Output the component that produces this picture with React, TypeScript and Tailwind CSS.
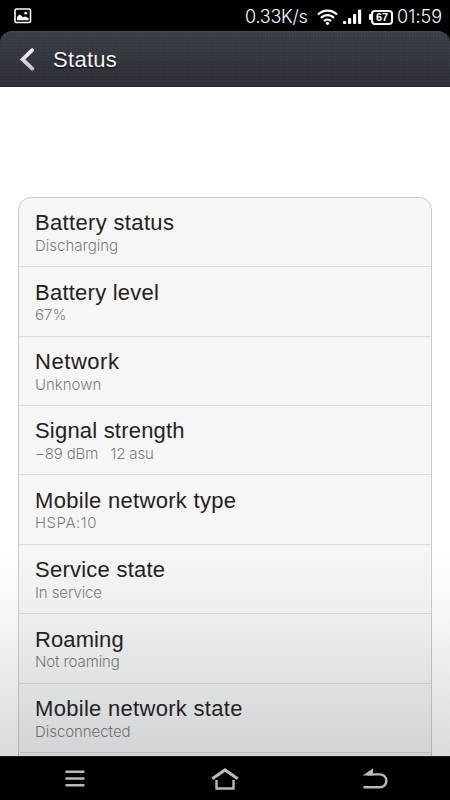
import React from "react";

type Item = { title: string; detail: string; titleTracking: string; detailTracking: string };

const items: Item[] = [
  { title: "Battery status", detail: "Discharging", titleTracking: "tracking-[0.34px]", detailTracking: "tracking-[0px]" },
  { title: "Battery level", detail: "67%", titleTracking: "tracking-[0.24px]", detailTracking: "tracking-[0px]" },
  { title: "Network", detail: "Unknown", titleTracking: "tracking-[0.55px]", detailTracking: "tracking-[0px]" },
  { title: "Signal strength", detail: "−89 dBm   12 asu", titleTracking: "tracking-[0.2px]", detailTracking: "tracking-[-0.13px]" },
  { title: "Mobile network type", detail: "HSPA:10", titleTracking: "tracking-[0.3px]", detailTracking: "tracking-[0.5px]" },
  { title: "Service state", detail: "In service", titleTracking: "tracking-[0.24px]", detailTracking: "tracking-[-0.1px]" },
  { title: "Roaming", detail: "Not roaming", titleTracking: "tracking-[0.1px]", detailTracking: "tracking-[-0.1px]" },
  { title: "Mobile network state", detail: "Disconnected", titleTracking: "tracking-[0.3px]", detailTracking: "tracking-[-0.05px]" },
];

function StatusBar() {
  return (
    <div className="flex h-[31px] shrink-0 items-center pl-[14px] pr-[8px] text-white">
      <svg width="18" height="16" viewBox="0 0 18 16">
        <rect x="1" y="1" width="15.5" height="13.5" rx="1.5" fill="none" stroke="#fff" strokeWidth="1.6" />
        <path d="M3 12.3V9L5.5 6.5l2 1.2L9 9.3l2.2-.9 3.3 1.6v2.3z" fill="#fff" />
        <circle cx="11.7" cy="5.2" r="1.4" fill="#fff" />
      </svg>
      <span className="ml-auto mt-[2px] w-[63px] whitespace-nowrap font-[Inter,sans-serif] text-[18px] font-light leading-none tracking-[-0.25px]">0.33K/s</span>
      <svg className="ml-[9px] mt-[2px]" width="21" height="16" viewBox="0 0 21 16" fill="none" stroke="#fff" strokeWidth="2.2">
        <path d="M1 5.5a13.5 13.5 0 0 1 19 0M4 8.9a9.2 9.2 0 0 1 13 0M7 12.1a5 5 0 0 1 7 0" />
        <circle cx="10.5" cy="14.3" r="1.6" fill="#fff" stroke="none" />
      </svg>
      <svg className="ml-[5px] mt-[2px]" width="19" height="15" viewBox="0 0 19 15" fill="#fff">
        <rect x="0" y="12" width="3.2" height="3" rx="1" />
        <rect x="5" y="9" width="3.2" height="6" rx="1" />
        <rect x="10" y="5" width="3.2" height="10" rx="1" />
        <rect x="15" y="0.5" width="3.2" height="14.5" rx="1" />
      </svg>
      <div className="ml-[7px] mt-[3px] flex items-center">
        <div className="h-[6px] w-[2px] rounded-l-[1px] bg-white" />
        <div className="flex h-[15px] w-[22px] items-center justify-center rounded-[4px] border-2 border-white pt-[1px] text-[11px] font-bold leading-none">67</div>
      </div>
      <span className="ml-[4px] mt-[2px] w-[45px] whitespace-nowrap font-[Inter,sans-serif] text-[18px] font-light leading-none tracking-[0.1px]">01:59</span>
    </div>
  );
}

function Header() {
  return (
    <div className="flex h-[56px] shrink-0 items-center rounded-t-[12px] border-b border-[#25272b] border-t border-t-[#494b51] bg-[repeating-linear-gradient(90deg,rgba(0,0,0,0.06)_0_1px,transparent_1px_3px),repeating-linear-gradient(0deg,rgba(0,0,0,0.06)_0_1px,transparent_1px_3px),linear-gradient(#3d4149,#2e3137)] pl-[19px]">
      <svg width="17" height="24" viewBox="0 0 17 24" fill="none">
        <defs>
          <linearGradient id="chevron" x1="0" y1="0" x2="0" y2="1">
            <stop offset="0" stopColor="#f4f4f4" />
            <stop offset="1" stopColor="#c6c6c8" />
          </linearGradient>
        </defs>
        <path d="M13.2 3.2 3.6 12.4l9.6 9.2" stroke="url(#chevron)" strokeWidth="3.8" strokeLinecap="round" />
      </svg>
      <h1 className="ml-[17px] mt-[2px] text-[22px] leading-none tracking-[0.3px] text-[#f4f4f4] [text-shadow:0_1px_2px_#000]">Status</h1>
    </div>
  );
}

function NavBar() {
  return (
    <div className="flex h-[44px] shrink-0 items-center border-t border-[#1c1c1c] bg-black text-[#b9b9b9]">
      <div className="flex flex-1 justify-center">
        <svg width="20" height="18" viewBox="0 0 20 18" fill="currentColor">
          <path d="M.5.5h19v2.4H.5zM.5 7.3h19v2.4H.5zM.5 14.1h19v2.4H.5z" />
        </svg>
      </div>
      <div className="flex flex-1 justify-center">
        <svg width="28" height="24" viewBox="0 0 28 24" fill="none" stroke="currentColor">
          <path d="M1.3 11.8 14 3l12.7 8.8" strokeWidth="3.2" />
          <path d="M5.5 13v8.5h17V13" strokeWidth="2.4" />
        </svg>
      </div>
      <div className="flex flex-1 justify-center">
        <svg width="26" height="22" viewBox="0 0 26 22">
          <path d="M.5 7.6 11 .4v7.2z" fill="currentColor" />
          <path d="M5 6.4h13a6.4 6.4 0 0 1 0 12.8H1.5" fill="none" stroke="currentColor" strokeWidth="2.4" />
        </svg>
      </div>
    </div>
  );
}

export default function App() {
  return (
    <div className="flex h-[800px] w-[450px] flex-col overflow-hidden bg-black font-['Liberation_Sans',Arial,sans-serif]">
      <StatusBar />
      <Header />
      <main className="relative min-h-0 flex-1 overflow-hidden bg-white px-[18px] pt-[110px]">
        <ul className="h-[620px] rounded-[13px] border-[1.5px] border-[#cccccc] bg-[#f6f6f6]">
          {items.map((item) => (
            <li key={item.title} className="h-[69.36px] border-b border-[#dadada] pl-[16px] pt-[13.4px]">
              <div className={`whitespace-nowrap text-[22px] leading-[24px] text-[#222222] ${item.titleTracking}`}>{item.title}</div>
              <div className={`mt-[0.6px] whitespace-pre font-[Inter,sans-serif] text-[15px] font-light leading-[20px] text-[#7c7c7c] ${item.detailTracking}`}>{item.detail}</div>
            </li>
          ))}
        </ul>
        <div className="pointer-events-none absolute inset-x-0 bottom-0 h-[210px] bg-[linear-gradient(rgba(30,40,45,0),rgba(30,40,45,0.035)_30%,rgba(30,40,45,0.17))]" />
      </main>
      <NavBar />
    </div>
  );
}
